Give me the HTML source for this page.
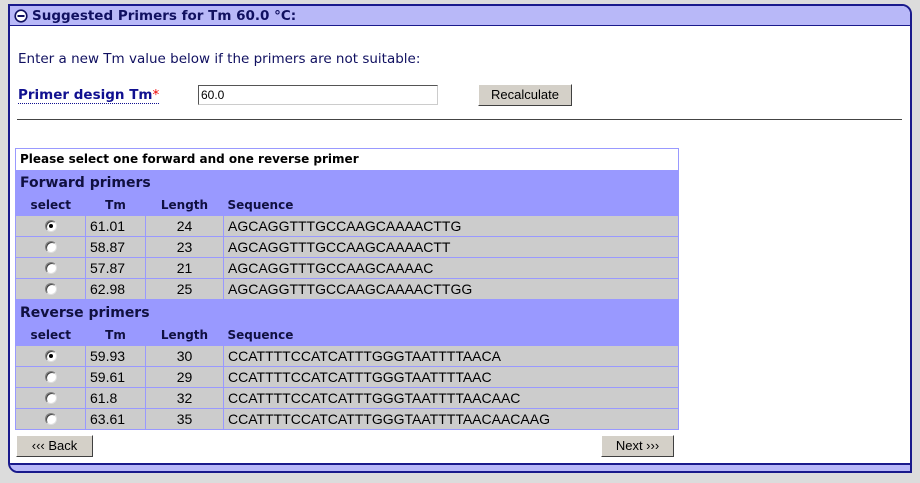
<!DOCTYPE html>
<html><head><meta charset="utf-8"><style>
*{margin:0;padding:0;box-sizing:border-box}
body{width:920px;height:483px;background:#dcdcdc;position:relative;overflow:hidden;font-family:"DejaVu Sans",Verdana,sans-serif}
.panel{position:absolute;left:8px;top:4px;width:904px;height:469px;background:#fff;border:2px solid #1a1a8c;border-radius:0 10px 0 10px;overflow:hidden}
.hdr{position:absolute;left:0;top:0;width:100%;height:20px;background:#b8b8f8;border-bottom:1px solid #1a1a8c;color:#101060;font-weight:bold;font-size:13.5px;line-height:20px;padding-left:22px}
.hdr svg{position:absolute;left:4px;top:3px}
.foot{position:absolute;left:0;bottom:0;width:100%;height:8px;background:#b8b8f8;border-top:2px solid #1a1a8c}
.abs{position:absolute}
.btn{position:absolute;background:#d4d0c8;border:1px solid;border-color:#fff #404040 #404040 #fff;font-family:"Liberation Sans",Arial,sans-serif;font-size:13px;text-align:center;line-height:19px;color:#000}
table{position:absolute;left:15px;top:148px;width:664px;border-collapse:collapse;border:1px solid #9999ff}
td{border:1px solid #9999ff;background:#ccc;font-family:"Liberation Sans",Arial,sans-serif;font-size:14px;height:21px;padding:0 4px;color:#000}
td.c{text-align:center}
tr.t td{background:#fff;font-family:"DejaVu Sans",Verdana,sans-serif;font-weight:bold;font-size:12px;color:#000;border:none;padding-left:4px}
tr.s td{background:#9999ff;font-family:"DejaVu Sans",Verdana,sans-serif;font-size:14px;font-weight:bold;color:#101040;height:25px;border:none;padding-left:4px;padding-top:2px}
tr.h td{background:#9999ff;font-family:"DejaVu Sans",Verdana,sans-serif;font-weight:bold;font-size:12px;color:#101040;border:none;height:21px}
.r{display:block;margin:0 auto;width:12px;height:12px;border-radius:50%;background:#fff;border:1px solid #808080;border-right-color:#e0e0e0;border-bottom-color:#e0e0e0;box-shadow:inset 1px 1px 0 #404040;position:relative}
.r.on::after{content:"";position:absolute;left:3px;top:3px;width:4px;height:4px;border-radius:50%;background:#000}
</style></head><body>
<div class="panel">
<div class="hdr"><svg width="14" height="14"><circle cx="7" cy="7" r="5.8" fill="#fff" stroke="#101060" stroke-width="1.6"/><rect x="3.5" y="6" width="7" height="2" fill="#101060"/></svg>Suggested Primers for Tm 60.0 °C:</div>
<div class="foot"></div>
</div>
<div class="abs" style="left:18px;top:51px;font-size:13.5px;color:#101060">Enter a new Tm value below if the primers are not suitable:</div>
<div class="abs" style="left:18px;top:87px;font-size:13.5px;font-weight:bold;color:#101090;border-bottom:1px dotted #101090;line-height:16px">Primer design Tm<span style="color:#e00;font-weight:normal">*</span></div>
<div class="abs" style="left:198px;top:85px;width:240px;height:20px;border:1px solid;border-color:#555 #ccc #ccc #555;font-family:'Liberation Sans',Arial,sans-serif;font-size:12px;line-height:18px;padding-left:2px">60.0</div>
<div class="btn" style="left:478px;top:84px;width:94px;height:22px">Recalculate</div>
<div class="abs" style="left:17px;top:119px;width:885px;height:1px;background:#444"></div>
<table>
<tr class="t"><td colspan="4">Please select one forward and one reverse primer</td></tr>
<tr class="s"><td colspan="4">Forward primers</td></tr>
<tr class="h"><td class="c" style="width:70px">select</td><td class="c" style="width:60px">Tm</td><td class="c" style="width:78px">Length</td><td>Sequence</td></tr>
<tr><td class="c"><span class="r on"></span></td><td>61.01</td><td class="c">24</td><td>AGCAGGTTTGCCAAGCAAAACTTG</td></tr>
<tr><td class="c"><span class="r"></span></td><td>58.87</td><td class="c">23</td><td>AGCAGGTTTGCCAAGCAAAACTT</td></tr>
<tr><td class="c"><span class="r"></span></td><td>57.87</td><td class="c">21</td><td>AGCAGGTTTGCCAAGCAAAAC</td></tr>
<tr><td class="c"><span class="r"></span></td><td>62.98</td><td class="c">25</td><td>AGCAGGTTTGCCAAGCAAAACTTGG</td></tr>
<tr class="s"><td colspan="4">Reverse primers</td></tr>
<tr class="h"><td class="c">select</td><td class="c">Tm</td><td class="c">Length</td><td>Sequence</td></tr>
<tr><td class="c"><span class="r on"></span></td><td>59.93</td><td class="c">30</td><td>CCATTTTCCATCATTTGGGTAATTTTAACA</td></tr>
<tr><td class="c"><span class="r"></span></td><td>59.61</td><td class="c">29</td><td>CCATTTTCCATCATTTGGGTAATTTTAAC</td></tr>
<tr><td class="c"><span class="r"></span></td><td>61.8</td><td class="c">32</td><td>CCATTTTCCATCATTTGGGTAATTTTAACAAC</td></tr>
<tr><td class="c"><span class="r"></span></td><td>63.61</td><td class="c">35</td><td>CCATTTTCCATCATTTGGGTAATTTTAACAACAAG</td></tr>
</table>
<div class="btn" style="left:16px;top:435px;width:77px;height:22px">‹‹‹ Back</div>
<div class="btn" style="left:601px;top:435px;width:73px;height:22px">Next ›››</div>
</body></html>
